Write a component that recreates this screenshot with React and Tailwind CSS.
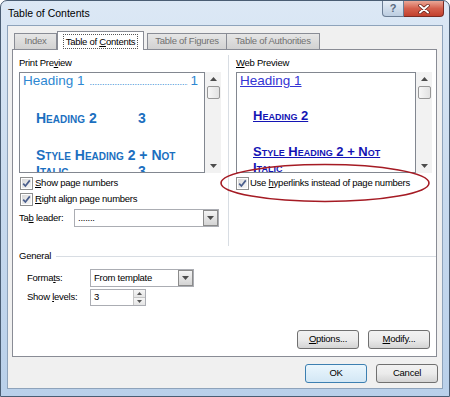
import React from "react";

const Check = () => (
  <span className="w-[13px] h-[13px] border border-[#8e8f8f] bg-white p-[1px] flex shrink-0">
    <span className="flex-1 bg-gradient-to-br from-[#d9d9d9] to-[#f7f7f7] flex items-center justify-center">
      <svg width="9" height="9" viewBox="0 0 9 9">
        <path d="M1.2 4.6 L3.4 7 L7.8 1.4" fill="none" stroke="#4a5e8c" strokeWidth="1.7" />
      </svg>
    </span>
  </span>
);

const Arrow = ({ up }) => (
  <svg width="7" height="4" viewBox="0 0 7 4">
    <path d={up ? "M0 4 L3.5 0 L7 4 Z" : "M0 0 L7 0 L3.5 4 Z"} fill="#4d4d4d" />
  </svg>
);

const ScrollBar = () => (
  <div className="w-[16px] h-full bg-[#f2f2f2] flex flex-col items-center">
    <div className="h-[14px] flex items-center justify-center">
      <Arrow up />
    </div>
    <div className="w-[13px] h-[13px] border border-[#979797] rounded-[2px] bg-gradient-to-r from-[#f7f7f7] to-[#e2e2e2]" />
    <div className="flex-1" />
    <div className="h-[14px] flex items-center justify-center">
      <Arrow />
    </div>
  </div>
);

const DropButton = () => (
  <div className="w-[15px] h-full border border-[#8b8b8b] bg-gradient-to-b from-[#f4f4f4] to-[#d4d4d4] flex items-center justify-center">
    <Arrow />
  </div>
);

const Button = ({ children, focus }) => (
  <div
    className={
      focus
        ? "w-[62px] h-[19px] rounded-[3px] border border-[#3c7fb1] bg-gradient-to-b from-[#eaf6fd] to-[#d3e7f5] flex items-center justify-center"
        : "w-[62px] h-[19px] rounded-[3px] border border-[#707070] bg-gradient-to-b from-[#f2f2f2] via-[#ebebeb] to-[#d4d4d4] flex items-center justify-center"
    }
  >
    {children}
  </div>
);

export default function App() {
  return (
    <div className="w-[450px] h-[397px] flex flex-col border border-[#4a5d73] rounded-t-[7px] bg-gradient-to-b from-[#dce8f5] via-[#c8daee] to-[#b9d0ea] overflow-hidden font-['Liberation_Sans',Arial,sans-serif] text-black text-[9.5px] tracking-[-0.25px]">
      {/* Title bar */}
      <div className="h-[24px] flex items-start">
        <span className="pl-[7px] mt-[5px] text-[10.5px] tracking-normal leading-[14px]">Table of Contents</span>
        <div className="ml-auto mr-[5px] flex">
          <div className="w-[22px] h-[16px] border border-[#6b7d94] border-t-0 rounded-bl-[4px] bg-gradient-to-b from-[#e6eef7] to-[#bccde0] flex items-center justify-center text-[11px] text-[#5a6b80] font-bold">
            ?
          </div>
          <div className="w-[40px] h-[16px] border border-[#7a2a22] border-t-0 border-l-0 rounded-br-[4px] bg-gradient-to-b from-[#e9a797] via-[#d4604d] to-[#c2402d] flex items-center justify-center">
            <svg width="12" height="10" viewBox="0 0 12 10">
              <path d="M2 1.5 L10 8.5 M10 1.5 L2 8.5" stroke="#5b1a14" strokeWidth="3.4" strokeLinecap="round" />
              <path d="M2 1.5 L10 8.5 M10 1.5 L2 8.5" stroke="#ffffff" strokeWidth="2" strokeLinecap="round" />
            </svg>
          </div>
        </div>
      </div>

      {/* Client */}
      <div className="ml-[6px] w-[436px] h-[364px] border border-[#8ea3bb] bg-[#f0f0f0] flex flex-col pl-[4px] pr-[4px]">
        {/* Tabs */}
        <div className="h-[23px] flex items-end">
          <div className="ml-[2px] w-[43px] h-[16px] border border-[#898c95] border-b-0 bg-gradient-to-b from-[#e6e6e6] to-[#d2d2d2] flex items-center justify-center text-[#707070]">
            Index
          </div>
          <div className="relative z-10 w-[87px] h-[19px] -mb-px border border-[#898c95] border-b-0 bg-white flex items-start justify-center pt-[2px]">
            <span className="px-[2px] leading-[13px] border border-dotted border-[#555]">
              Table of <u>C</u>ontents
            </span>
          </div>
          <div className="ml-[3px] w-[80px] h-[16px] border border-[#898c95] border-b-0 bg-gradient-to-b from-[#e6e6e6] to-[#d2d2d2] flex items-center justify-center text-[#707070]">
            Table of Figures
          </div>
          <div className="-ml-px w-[94px] h-[16px] border border-[#898c95] border-b-0 bg-gradient-to-b from-[#e6e6e6] to-[#d2d2d2] flex items-center justify-center text-[#707070]">
            Table of Authorities
          </div>
        </div>

        {/* Panel */}
        <div className="relative w-[425px] h-[308px] border border-[#898c95] bg-white flex flex-col">
          <div className="h-[196px] flex">
            {/* Print preview */}
            <div className="w-[215px] pl-[6px] pt-[7px] flex flex-col">
              <div className="leading-[12px]">
                Print Pre<u>v</u>iew
              </div>
              <div className="mt-[3px] h-[101px] flex">
                <div className="w-[186px] h-full border border-[#828790] overflow-hidden font-['Liberation_Sans',Arial,sans-serif] tracking-normal">
                  <div className="flex items-baseline pl-[3px] pr-[6px] text-[13.5px] leading-[16px] text-[#2d87d2]">
                    <span>Heading 1</span>
                    <span className="flex-1 overflow-hidden whitespace-nowrap ml-[5px] mr-[2px] text-[9px]">
                      ..........................................................................
                    </span>
                    <span>1</span>
                  </div>
                  <div className="mt-[20px] pl-[16px] flex text-[14px] font-bold leading-[16px] text-[#1b6fbf] [font-variant:small-caps]">
                    <span className="w-[102px]">Heading 2</span>
                    <span>3</span>
                  </div>
                  <div className="mt-[21px] pl-[16px] text-[14px] font-bold leading-[16px] text-[#1b6fbf] [font-variant:small-caps] whitespace-nowrap">
                    Style Heading 2 + Not
                  </div>
                  <div className="pl-[16px] flex text-[14px] font-bold leading-[16px] text-[#1b6fbf] [font-variant:small-caps]">
                    <span className="w-[102px]">Italic</span>
                    <span>3</span>
                  </div>
                </div>
                <ScrollBar />
              </div>
              <div className="mt-[3px] h-[14px] flex items-center gap-[2px] ml-[1px]">
                <Check />
                <span>
                  <u>S</u>how page numbers
                </span>
              </div>
              <div className="mt-[2px] h-[14px] flex items-center gap-[2px] ml-[1px]">
                <Check />
                <span>
                  <u>R</u>ight align page numbers
                </span>
              </div>
              <div className="mt-[3px] h-[18px] flex items-center">
                <span className="w-[55px]">
                  Ta<u>b</u> leader:
                </span>
                <div className="w-[145px] h-full border border-[#abadb3] bg-white flex items-center">
                  <span className="flex-1 pl-[3px]">.......</span>
                  <DropButton />
                </div>
              </div>
            </div>

            <div className="w-px mt-[5px] bg-[#d8dde3]" />

            {/* Web preview */}
            <div className="flex-1 pl-[7px] pt-[7px] flex flex-col">
              <div className="leading-[12px]">
                <u>W</u>eb Preview
              </div>
              <div className="mt-[3px] h-[101px] flex">
                <div className="w-[180px] h-full border border-[#828790] overflow-hidden tracking-normal">
                  <div className="pl-[3px] text-[13.5px] leading-[16px] text-[#3434d4] underline">Heading 1</div>
                  <div className="mt-[19px] pl-[16px] text-[13px] font-bold leading-[16px] text-[#1414b4] underline [font-variant:small-caps]">
                    Heading 2
                  </div>
                  <div className="mt-[20px] pl-[16px] text-[13px] font-bold leading-[16px] text-[#1414b4] underline [font-variant:small-caps] whitespace-nowrap">
                    Style Heading 2 + Not
                  </div>
                  <div className="pl-[16px] text-[13px] font-bold leading-[16px] text-[#1414b4] underline [font-variant:small-caps]">
                    Italic
                  </div>
                </div>
                <ScrollBar />
              </div>
              <div className="mt-[3px] h-[14px] flex items-center gap-[1px]">
                <Check />
                <span>
                  Use <u>h</u>yperlinks instead of page numbers
                </span>
              </div>
            </div>
          </div>

          {/* General */}
          <div className="h-[20px] flex items-center pl-[6px]">
            <span>General</span>
            <div className="flex-1 h-px ml-[5px] bg-[#d8dde3]" />
          </div>
          <div className="mt-[3px] h-[18px] flex items-center pl-[14px]">
            <span className="w-[63px]">
              Forma<u>t</u>s:
            </span>
            <div className="w-[104px] h-full border border-[#abadb3] bg-white flex items-center">
              <span className="flex-1 pl-[3px]">From template</span>
              <DropButton />
            </div>
          </div>
          <div className="mt-[2px] h-[17px] flex items-center pl-[14px]">
            <span className="w-[63px]">
              Show <u>l</u>evels:
            </span>
            <div className="w-[56px] h-full border border-[#abadb3] bg-white flex items-center">
              <span className="flex-1 pl-[3px]">3</span>
              <div className="w-[12px] h-full flex flex-col border-l border-[#c5c5c5]">
                <div className="flex-1 bg-gradient-to-b from-[#f6f6f6] to-[#e4e4e4] border-b border-[#c5c5c5] flex items-center justify-center">
                  <svg width="5" height="3" viewBox="0 0 5 3">
                    <path d="M0 3 L2.5 0 L5 3 Z" fill="#555" />
                  </svg>
                </div>
                <div className="flex-1 bg-gradient-to-b from-[#f6f6f6] to-[#e4e4e4] flex items-center justify-center">
                  <svg width="5" height="3" viewBox="0 0 5 3">
                    <path d="M0 0 L5 0 L2.5 3 Z" fill="#555" />
                  </svg>
                </div>
              </div>
            </div>
          </div>

          <div className="flex-1" />
          <div className="flex justify-end gap-[9px] pr-[6px] pb-[7px]">
            <Button>
              <span>
                <u>O</u>ptions...
              </span>
            </Button>
            <Button>
              <span>
                <u>M</u>odify...
              </span>
            </Button>
          </div>

          {/* Highlight ring */}
          <svg className="absolute left-[206px] top-[113px]" width="212" height="40" viewBox="0 0 212 40">
            <ellipse cx="106" cy="20" rx="104" ry="18.5" fill="none" stroke="#a51b24" strokeWidth="1.6" />
          </svg>
        </div>

        <div className="mt-[7px] flex justify-end gap-[9px]">
          <Button focus>OK</Button>
          <Button>Cancel</Button>
        </div>
      </div>
    </div>
  );
}
